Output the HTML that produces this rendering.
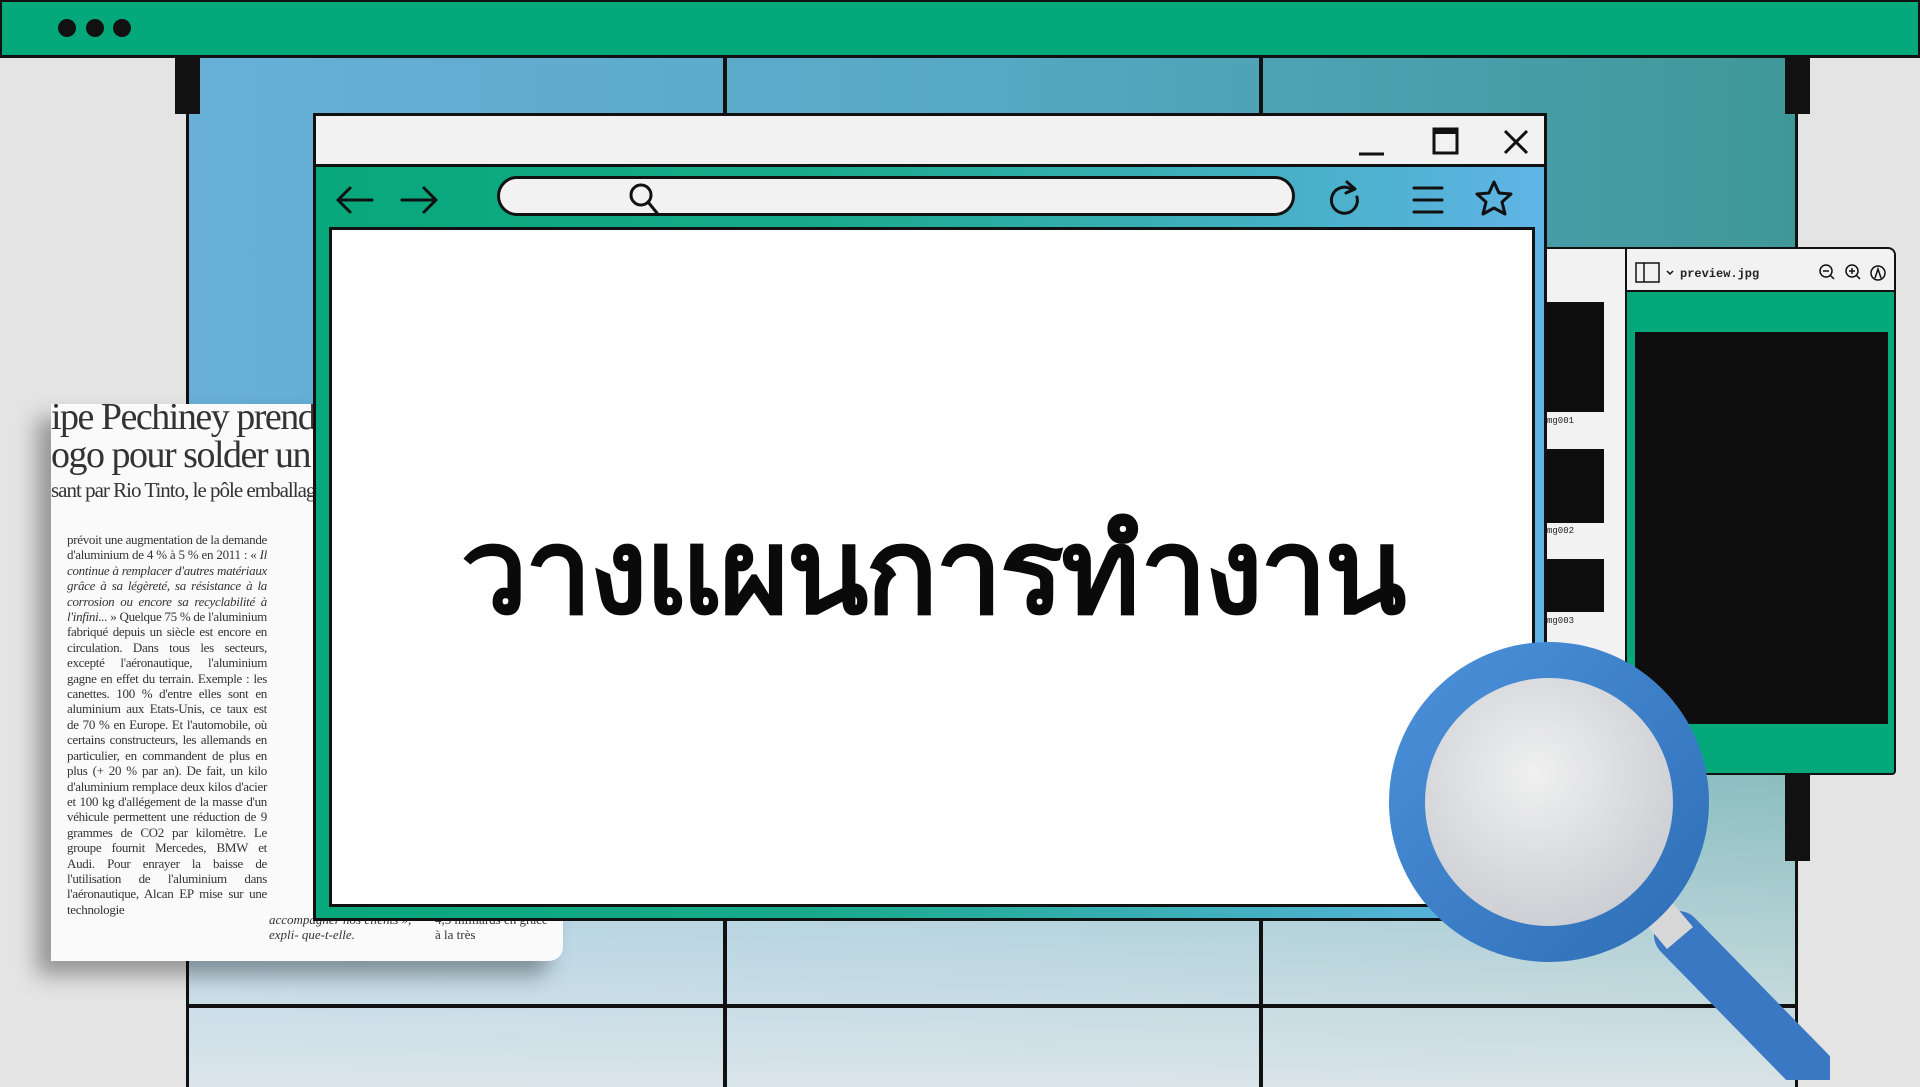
<!DOCTYPE html>
<html><head><meta charset="utf-8"><style>
*{margin:0;padding:0;box-sizing:border-box}
body{width:1920px;height:1080px;overflow:hidden;background:#e4e4e4;position:relative;font-family:"Liberation Sans",sans-serif}
.abs{position:absolute}
#grid{left:186px;top:57px;width:1612px;height:1030px;border-left:3px solid #111;border-right:3px solid #111;
background:linear-gradient(180deg,rgba(255,255,255,0) 40%,rgba(225,232,236,.95) 100%),linear-gradient(90deg,#68b0d8 0%,#56a8c4 50%,#3f9898 100%)}
.vl{width:4px;background:#111;top:57px;height:1030px}
.hl{height:4px;background:#111;left:186px;width:1612px}
#top{left:0;top:0;width:1920px;height:58px;background:#05a87a;border:2px solid #111;border-width:2px 2px 3px 2px}
.dot{width:18px;height:18px;border-radius:50%;background:#111;top:19px}
.post{width:25px;background:#111}
#paper{left:51px;top:404px;width:512px;height:557px;background:#fafafa;box-shadow:-14px 14px 22px rgba(0,0,0,.35);overflow:hidden;font-family:"Liberation Serif",serif;color:#333;border-radius:0 0 14px 0}
#paper .h{font-size:38px;line-height:38px;white-space:nowrap;letter-spacing:-1.5px}
#paper .cols{position:absolute;left:16px;top:128px;font-size:13px;line-height:15.4px;color:#333;width:200px;text-align:justify;letter-spacing:-0.3px}
#browser{left:313px;top:113px;width:1234px;height:808px;border:3px solid #111;background:linear-gradient(90deg,#07a87b,#17aa8a 40%,#60b4e6 100%)}
#title{left:0;top:0;width:1228px;height:51px;background:#f2f2f2;border-bottom:3px solid #111}
#content{left:13px;top:111px;width:1206px;height:680px;background:#fff;border:3px solid #111}
#addr{left:181px;top:60px;width:798px;height:40px;background:#f2f2f2;border:3px solid #111;border-radius:20px}
#h1{left:0;width:100%;text-align:center;font-family:"Liberation Sans",sans-serif;font-weight:bold;font-size:120px;color:#0a0a0a;line-height:1;letter-spacing:-3px}
#side{left:1547px;top:247px;width:80px;height:528px;background:#f2f2f2;border-top:2px solid #111}
.th{background:#0e0e0e;left:1547px;width:57px}
.tl{font-family:"Liberation Mono",monospace;font-size:9px;color:#222;left:1547px}
#prev{left:1625px;top:247px;width:271px;height:528px;border:2px solid #111;border-radius:0 8px 4px 0;background:#05a87a;overflow:hidden}
#ph{left:0;top:0;width:100%;height:43px;background:#f2f2f2;border-bottom:2px solid #111}
</style></head><body>
<div id="grid" class="abs"></div>
<div class="abs vl" style="left:723px"></div>
<div class="abs vl" style="left:1259px"></div>
<div class="abs hl" style="top:1004px"></div>
<div class="abs post" style="left:175px;top:57px;height:57px"></div>
<div class="abs post" style="left:1785px;top:57px;height:57px"></div>
<div class="abs post" style="left:1785px;top:775px;height:86px"></div>
<div id="top" class="abs"></div>
<div class="abs dot" style="left:58px"></div>
<div class="abs dot" style="left:86px"></div>
<div class="abs dot" style="left:113px"></div>

<div id="paper" class="abs">
<div class="abs h" style="left:0;top:-6px">ipe Pechiney prend</div>
<div class="abs h" style="left:0;top:32px">ogo pour solder un</div>
<div class="abs" style="left:0;top:74px;font-size:21px;white-space:nowrap;letter-spacing:-1px">sant par Rio Tinto, le pôle emballage</div>
<div class="cols">prévoit une augmentation de la demande d'aluminium de 4 % à 5 % en 2011 : « <i>Il continue à remplacer d'autres matériaux grâce à sa légèreté, sa résistance à la corrosion ou encore sa recyclabilité à l'infini...</i> » Quelque 75 % de l'aluminium fabriqué depuis un siècle est encore en circulation. Dans tous les secteurs, excepté l'aéronautique, l'aluminium gagne en effet du terrain. Exemple : les canettes. 100 % d'entre elles sont en aluminium aux Etats-Unis, ce taux est de 70 % en Europe. Et l'automobile, où certains constructeurs, les allemands en particulier, en commandent de plus en plus (+ 20 % par an). De fait, un kilo d'aluminium remplace deux kilos d'acier et 100 kg d'allégement de la masse d'un véhicule permettent une réduction de 9 grammes de CO2 par kilomètre. Le groupe fournit Mercedes, BMW et Audi. Pour enrayer la baisse de l'utilisation de l'aluminium dans l'aéronautique, Alcan EP mise sur une technologie</div>
<div class="abs" style="left:218px;top:508px;width:160px;font-size:13px;line-height:15.4px;font-style:italic">accompagner nos clients », expli- que-t-elle.</div>
<div class="abs" style="left:384px;top:508px;width:120px;font-size:13px;line-height:15.4px">4,5 milliards en grâce à la très</div>
</div>

<div id="browser" class="abs">
<div id="title" class="abs">
<svg class="abs" style="left:0;top:0" width="1228" height="51"><g stroke="#111" stroke-width="3" fill="none">
<path d="M1043 38h25"/><rect x="1118" y="13" width="23" height="24"/><path d="M1118 15h23" stroke-width="6"/><path d="M1189 15l22 22M1211 15l-22 22"/></g></svg>
</div>
<div id="addr" class="abs"></div>
<svg class="abs" style="left:0;top:51px" width="1228" height="60"><g stroke="#111" stroke-width="3" fill="none" stroke-linecap="round" stroke-linejoin="round">
<path d="M22 33h34M22 33l12-12M22 33l12 12"/><path d="M86 33h34M120 33l-12-12M120 33l-12 12"/>
<circle cx="325" cy="28" r="10"/><path d="M332 35l9 11"/>
<path d="M1035 22a13 13 0 1 0 6 8"/><path d="M1031 15l8 7-9 4"/>
<path d="M1098 21h28M1098 33h28M1098 45h28"/>
<path d="M1178 15l5 11 12 1-9 8 3 12-11-6-11 6 3-12-9-8 12-1z"/></g></svg>
<div id="content" class="abs"><div id="h1" class="abs" style="top:282px">วางแผนการทำงาน</div></div>
</div>

<div id="side" class="abs"></div>
<div class="abs th" style="top:302px;height:110px"></div>
<div class="abs tl" style="top:416px">mg001</div>
<div class="abs th" style="top:449px;height:74px"></div>
<div class="abs tl" style="top:526px">mg002</div>
<div class="abs th" style="top:559px;height:53px"></div>
<div class="abs tl" style="top:616px">mg003</div>
<div id="prev" class="abs">
<div id="ph" class="abs">
<svg class="abs" style="left:0;top:0" width="271" height="43"><g stroke="#111" stroke-width="1.5" fill="none">
<rect x="9" y="14" width="23" height="19"/><path d="M17 14v19"/><path d="M40 22l3 3 3-3"/>
<circle cx="199" cy="22" r="6"/><path d="M196 22h6M203 26l4 4"/>
<circle cx="225" cy="22" r="6"/><path d="M222 22h6M225 19v6M229 26l4 4"/>
<circle cx="251" cy="24" r="7"/><path d="M248 29l3-9 3 9"/></g>
<text x="53" y="28" font-family="Liberation Mono,monospace" font-size="12" font-weight="bold" fill="#222">preview.jpg</text></svg>
</div>
<div class="abs" style="left:8px;top:83px;width:253px;height:392px;background:#0e0e0e"></div>
</div>

<svg class="abs" style="left:1380px;top:630px" width="450" height="450">
<defs><radialGradient id="lens" cx="45%" cy="40%" r="60%"><stop offset="0" stop-color="#f0f0f0"/><stop offset="1" stop-color="#c8cbd0"/></radialGradient>
<linearGradient id="ring" x1="0" y1="0" x2="1" y2="1"><stop offset="0" stop-color="#4a90d8"/><stop offset="1" stop-color="#2f6fb8"/></linearGradient></defs>
<path d="M298 305 L430 440" stroke="#3b78c4" stroke-width="48" stroke-linecap="round"/>
<path d="M278 282 L300 308" stroke="#d8d8d8" stroke-width="34"/>
<circle cx="169" cy="172" r="142" fill="url(#lens)" stroke="url(#ring)" stroke-width="36"/>
</svg>
</body></html>
